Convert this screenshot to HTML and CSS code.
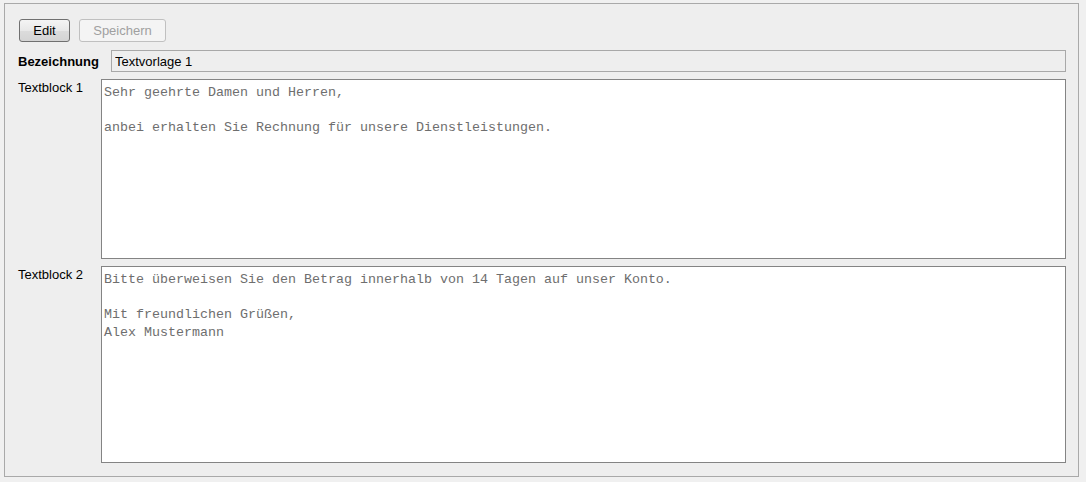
FILE: index.html
```html
<!DOCTYPE html>
<html>
    <head>
        <title>Textvorlage</title>
        <link rel="stylesheet" href="styles.css">
    </head>
    <body>
        <div class="panel">
            <div class="toolbar">
                <button class="btn" id="edit">Edit</button>
                <button class="btn" id="save" disabled>Speichern</button>
            </div>
            <div class="row name-row">
                <label for="name" class="name-label">Bezeichnung</label>
                <input type="text" id="name" value="Textvorlage 1" readonly />
            </div>
            <div class="row">
                <label for="block1" class="block-label">Textblock 1</label>
                <textarea id="block1" class="block-one" readonly>Sehr geehrte Damen und Herren,

anbei erhalten Sie Rechnung für unsere Dienstleistungen.</textarea>
            </div>
            <div class="row">
                <label for="block2" class="block-label">Textblock 2</label>
                <textarea id="block2" class="block-two" readonly>Bitte überweisen Sie den Betrag innerhalb von 14 Tagen auf unser Konto.

Mit freundlichen Grüßen,
Alex Mustermann</textarea>
            </div>
        </div>
    </body>
</html>
```

FILE: styles.css
```css
* {
    box-sizing: border-box;
}

body {
    margin: 0;
    background: #f0f0f0;
    font-family: Tahoma, 'Liberation Sans', Arial, sans-serif;
    font-size: 13px;
    color: #000;
}

.panel {
    margin: 3px 7px 0 4px;
    height: 474px;
    border: 1px solid #a9a9a9;
    background: #eeeeee;
    padding: 15px 12px 0 13px;
}

.toolbar {
    display: flex;
    gap: 9px;
    margin-left: 1px;
    margin-bottom: 8px;
}

.btn {
    height: 23px;
    padding: 0;
    font-family: inherit;
    font-size: 13px;
    border-radius: 3px;
}

#edit {
    width: 51px;
    border: 1px solid #707070;
    background: linear-gradient(#f4f4f4, #e8e8e8 50%, #dcdcdc 51%, #d4d4d4);
    color: #000;
}

#save {
    width: 87px;
    border: 1px solid #c0c0c0;
    background: #f4f4f4;
    color: #a0a0a0;
}

.row {
    display: flex;
    align-items: flex-start;
    margin-bottom: 7px;
}

.name-label {
    width: 93px;
    height: 22px;
    font-weight: bold;
    line-height: 21px;
    padding-top: 1px;
}

.block-label {
    width: 83px;
    line-height: 16px;
    padding-top: 1px;
}

#name {
    flex: 1;
    height: 22px;
    border: 1px solid #a8a8a8;
    background: #eeeeee;
    padding: 0 3px;
    font-family: inherit;
    font-size: 13px;
    color: #000;
    outline: none;
}

textarea {
    flex: 1;
    border: 1px solid #848484;
    background: #fff;
    padding: 4px 2px;
    font-family: 'Liberation Mono', 'Courier New', monospace;
    font-size: 13.33px;
    line-height: 17.5px;
    color: #6e6e6e;
    resize: none;
    outline: none;
}

.block-one {
    height: 180px;
}

.block-two {
    height: 197px;
}
```
